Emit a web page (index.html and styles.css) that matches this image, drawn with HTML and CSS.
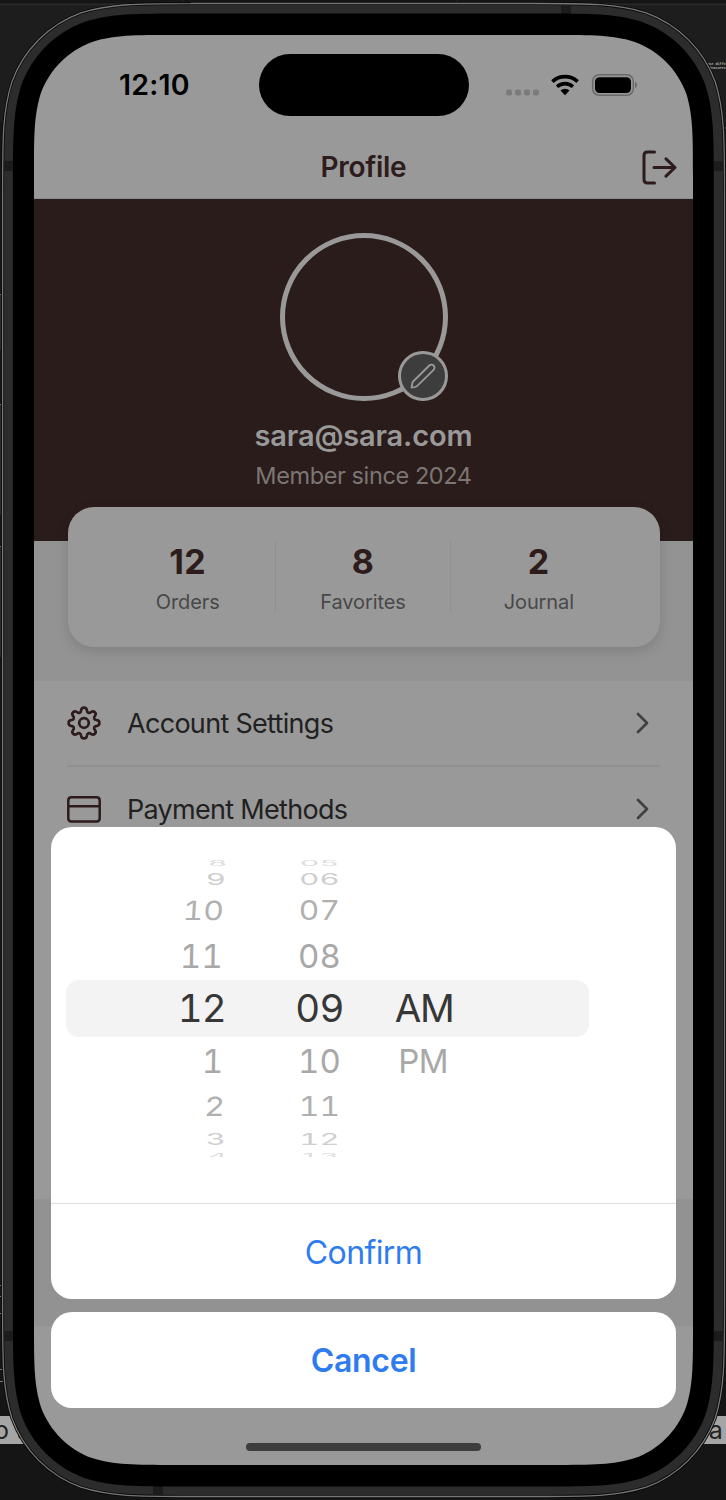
FILE: index.html
```html
<!DOCTYPE html>
<html lang="en">
<head>
<meta charset="utf-8">
<title>Profile</title>
<link rel="stylesheet" href="styles.css">
</head>
<body>
<div class="desktop">
  <div class="backdrop">
    <svg width="726" height="1500" viewBox="0 0 726 1500">
      <rect width="726" height="1500" fill="#151515"/>
      <path d="M0 6H726V122H0Z" fill="#1d1d1d"/>
      <path d="M0 4.5H726" stroke="#292929" stroke-width="2"/>
      <path d="M183 0V4M457 0V4" stroke="#292929"/>
      <path d="M0 294.500H3M0 404.500H3M0 546.500H3M0 1285.500H3M0 1296.500H3M0 1313.500H3M0 1369.500H3M0 1381.500H3" stroke="#777"/>
      <path d="M0 295H3V350H0ZM0 405H3V515H0ZM0 547H3V657H0ZM724 409H726V541H724Z" fill="#292929"/>
      <path d="M0 1416H40V1444H0ZM690 1416H726V1444H690Z" fill="#a5a5a5"/>
      <path d="M723 408.500H726M723 128H726M723 168H726M723 200H726" stroke="#666"/>
      <circle cx="726" cy="850" r="2.500" fill="none" stroke="#888"/>
    </svg>
    <span class="note note-a">use diffe</span>
    <span class="note note-b">features</span>
    <span class="peek peek-left">o t</span>
    <span class="peek peek-right">na</span>
  </div>
  <svg class="frame" width="726" height="1500" viewBox="0 0 726 1500">
    <path d="M192.100 3.500H535c54.600 0 81.900 0 111.200 9.300c32.100 11.700 57.300 36.900 69 69c9.300 29.400 9.300 56.700 9.300 111.300V1307c0 54.600 0 81.900-9.300 111.200c-11.700 32.100-36.900 57.300-69 69c-29.400 9.300-56.700 9.300-111.300 9.300H192.100c-54.600 0-81.900 0-111.200-9.300c-32.100-11.700-57.300-36.900-69-69c-9.300-29.400-9.300-56.700-9.300-111.300V193.100c0-54.600 0-81.900 9.300-111.200c11.700-32.100 36.900-57.300 69-69c29.400-9.300 56.700-9.300 111.300-9.300Z" fill="#2c2c2c" stroke="#0a0a0a" stroke-width="3"/>
    <path d="M192.100 3.500H535c54.600 0 81.900 0 111.200 9.300c32.100 11.700 57.300 36.900 69 69c9.300 29.400 9.300 56.700 9.300 111.300V1307c0 54.600 0 81.900-9.300 111.200c-11.700 32.100-36.900 57.300-69 69c-29.400 9.300-56.700 9.300-111.300 9.300H192.100c-54.600 0-81.900 0-111.200-9.300c-32.100-11.700-57.300-36.900-69-69c-9.300-29.400-9.300-56.700-9.300-111.300V193.100c0-54.600 0-81.900 9.300-111.200c11.700-32.100 36.900-57.300 69-69c29.400-9.300 56.700-9.300 111.300-9.300Z" fill="none" stroke="#777" stroke-width="1.300"/>
    <path d="M561 5h10v9h-10ZM153 1486h10v9h-10ZM4 161h9v10H4ZM714 161h9v10h-9ZM4 1331h9v10H4ZM714 1331h9v10h-9Z" fill="#1c1c1c"/>
    <path d="M185.700 13.500H541c49.700 0 74.600 0 101.400 8.500c29.200 10.600 52.300 33.700 62.900 62.900c8.500 26.800 8.500 51.600 8.500 101.400V1313.700c0 49.700 0 74.600-8.500 101.400c-10.600 29.200-33.700 52.300-62.900 62.900c-26.800 8.500-51.600 8.500-101.400 8.500H185.700c-49.700 0-74.600 0-101.400-8.500c-29.200-10.600-52.300-33.700-62.900-62.900c-8.500-26.800-8.500-51.600-8.500-101.400V186.300c0-49.700 0-74.600 8.500-101.400c10.600-29.200 33.700-52.300 62.900-62.900c26.800-8.500 51.600-8.500 101.400-8.500Z"/>
  </svg>
  <main class="screen">
    <div class="status">
      <span class="clock">12:10</span>
      <span class="island"></span>
      <svg class="signals" width="134" height="26" viewBox="0 0 134 26">
        <g fill="#7b7b7b"><rect x="0" y="17.500" width="6" height="6" rx="2"/><rect x="9" y="17.500" width="6" height="6" rx="2"/><rect x="18" y="17.500" width="6" height="6" rx="2"/><rect x="27" y="17.500" width="6" height="6" rx="2"/></g>
        <g fill="none" stroke="#000" stroke-width="3.600"><path d="M46.400 9.600a18.500 18.500 0 0 1 25.200 0"/><path d="M51.100 14.700a11.600 11.600 0 0 1 15.800 0"/></g>
        <path d="M54.500 18.600a6.600 6.600 0 0 1 9 0L59 23.300Z"/>
        <rect x="86.700" y="2.700" width="40.600" height="20.600" rx="6.500" fill="none" stroke="#6a6a6a" stroke-width="1.500"/>
        <rect x="89" y="5.200" width="36" height="15.800" rx="4.500"/>
        <path d="M129 9.800q4.200 3.200 0 6.400Z" fill="#6a6a6a"/>
      </svg>
    </div>
    <header class="header">
      <h1 class="title">Profile</h1>
      <svg class="logout" width="36" height="36" viewBox="0 0 36 36"><path d="M13.500 2H6.500Q3 2 3 5.500V29.500Q3 33 6.500 33H13.500M13 17.500H34M25 8.800L34 17.500L25 26.200" fill="none" stroke="#2e1c1c" stroke-width="3" stroke-linecap="round" stroke-linejoin="round"/></svg>
    </header>
    <section class="hero">
      <div class="avatar">
        <span class="edit"><svg width="26" height="26" viewBox="0 0 26 26"><path d="M1.500 24.500L2.600 19L19.300 2.500a3 3 0 0 1 4.300 0a3 3 0 0 1 0 4.300L7 23.200Q4.500 24.500 1.500 24.500Z" fill="none" stroke="#999" stroke-width="1.800" stroke-linejoin="round"/></svg></span>
      </div>
      <p class="email">sara@sara.com</p>
      <p class="member">Member since 2024</p>
    </section>
    <section class="stats">
      <div class="stat"><strong>12</strong><span>Orders</span></div>
      <div class="stat"><strong>8</strong><span>Favorites</span></div>
      <div class="stat"><strong>2</strong><span>Journal</span></div>
    </section>
    <section class="menu">
      <div class="row">
        <svg class="icon" width="34" height="34" viewBox="0 0 34 34"><g fill="none" stroke="#2e1c1c" stroke-width="2.700" stroke-linejoin="round"><circle cx="17" cy="17" r="4.800"/><path d="M14.200 4C14.700 .8 19.300 .8 19.800 4C20.200 7 22 7.700 24.200 6C26.800 4 30 7.200 28 9.800C26.300 12 27 13.800 30 14.200C33.200 14.700 33.200 19.300 30 19.800C27 20.200 26.300 22 28 24.200C30 26.800 26.800 30 24.200 28C22 26.300 20.200 27 19.800 30C19.300 33.200 14.700 33.200 14.200 30C13.800 27 12 26.300 9.800 28C7.200 30 4 26.800 6 24.200C7.700 22 7 20.200 4 19.800C.8 19.300 .8 14.700 4 14.200C7 13.800 7.700 12 6 9.800C4 7.200 7.200 4 9.800 6C12 7.700 13.800 7 14.200 4Z"/></g></svg>
        <span class="label">Account Settings</span>
        <svg class="chevron" width="14" height="22" viewBox="0 0 14 22"><path d="M2 2L11 11L2 20" fill="none" stroke="#404040" stroke-width="2.700" stroke-linecap="round" stroke-linejoin="round"/></svg>
      </div>
      <div class="row">
        <svg class="icon" width="34" height="34" viewBox="0 0 34 34"><path d="M4.500 5.200H29.500Q32.700 5.200 32.700 8.400V26.200Q32.700 29.400 29.500 29.400H4.500Q1.300 29.400 1.300 26.200V8.400Q1.300 5.200 4.500 5.200ZM1.300 14.300H32.700" fill="none" stroke="#2e1c1c" stroke-width="2.500"/></svg>
        <span class="label">Payment Methods</span>
        <svg class="chevron" width="14" height="22" viewBox="0 0 14 22"><path d="M2 2L11 11L2 20" fill="none" stroke="#404040" stroke-width="2.700" stroke-linecap="round" stroke-linejoin="round"/></svg>
      </div>
    </section>
    <div class="tabbar"></div>
    <div class="modal">
      <div class="sheet">
        <div class="picker">
          <div class="band"></div>
          <div class="wheel hours">
            <span class="r4 up">8</span><span class="r3">9</span><span class="r2">10</span><span class="r1">11</span><span class="now">12</span><span class="r1">1</span><span class="r2 low">2</span><span class="r3 low">3</span><span class="r4 low">4</span>
          </div>
          <div class="wheel minutes">
            <span class="r4 up">05</span><span class="r3">06</span><span class="r2">07</span><span class="r1">08</span><span class="now">09</span><span class="r1">10</span><span class="r2 low">11</span><span class="r3 low">12</span><span class="r4 low">13</span>
          </div>
          <div class="wheel period"><span class="now">AM</span><span class="r1">PM</span></div>
        </div>
        <div class="action confirm"><span>Confirm</span></div>
      </div>
      <div class="sheet action cancel"><span>Cancel</span></div>
      <div class="home"></div>
    </div>
  </main>
</div>
</body>
</html>
```
FILE: styles.css
```css
* { box-sizing: border-box; }
body { margin: 0; background: #151515; font-family: Inter, "Liberation Sans", sans-serif; }
h1, p { margin: 0; }
svg { display: block; flex: none; }
.desktop { position: relative; width: 726px; height: 1500px; padding: 35px 33px 35px 34px; overflow: hidden; }
.backdrop, .frame { position: absolute; left: 0; top: 0; }
.note { position: absolute; left: 707px; font: bold 3.500px/4px "Liberation Mono", monospace; color: #bbb; white-space: nowrap; }
.note-a { top: 62px; }
.note-b { top: 66px; left: 709px; }
.peek { position: absolute; top: 1415px; font-size: 25px; line-height: 30px; color: #222; white-space: nowrap; }
.peek-left { left: -6px; }
.peek-right { left: 694px; }
.screen { position: relative; display: flex; flex-direction: column; width: 659px; height: 1430px; background: #999; clip-path: path("M140.600 0H518.400c40.500 0 60.700 0 82.500 6.900c23.800 8.700 42.500 27.400 51.200 51.200c6.900 21.800 6.900 42 6.900 82.500V1289.400c0 40.500 0 60.700-6.900 82.500c-8.700 23.800-27.400 42.500-51.200 51.200c-21.800 6.900-42 6.900-82.500 6.900H140.600c-40.500 0-60.700 0-82.500-6.900c-23.800-8.700-42.500-27.400-51.200-51.200c-6.900-21.800-6.900-42-6.900-82.500V140.600c0-40.500 0-60.700 6.900-82.500c8.700-23.800 27.400-42.500 51.200-51.200c21.800-6.900 42-6.900 82.500-6.900Z"); }
.status { height: 99px; padding-top: 1px; display: grid; grid-template-columns: 224.500px 210px 1fr; align-items: center; }
.clock { padding-left: 85px; font-weight: 600; font-size: 28.500px; line-height: 34px; letter-spacing: .2px; }
.island { height: 62px; border-radius: 31px; background: #000; }
.signals { margin-left: 37.500px; margin-top: -1px; }
.header { height: 65px; display: grid; grid-template-columns: 1fr auto 1fr; align-items: center; color: #2e1c1c; border-bottom: 1px solid #8d8b8b; }
.title { grid-column: 2; font-weight: 600; font-size: 28px; line-height: 34px; letter-spacing: -.3px; margin-top: 1px; }
.logout { justify-self: end; margin-right: 16px; margin-top: 4px; }
.hero { flex: none; height: 342px; padding-top: 33.500px; background: #2a1c1b; display: flex; flex-direction: column; align-items: center; }
.avatar { position: relative; width: 168px; height: 168px; border: 5px solid #999; border-radius: 50%; }
.edit { position: absolute; right: -5px; bottom: -5px; width: 50px; height: 50px; border: 3px solid #999; border-radius: 50%; background: #3d3d3d; display: grid; place-items: center; }
.email { margin-top: 17.500px; font-weight: 600; font-size: 29px; line-height: 36px; letter-spacing: -.15px; color: #999; }
.member { margin-top: 6px; font-size: 23.500px; line-height: 32px; letter-spacing: -.4px; color: #7c7674; }
.stats { position: relative; z-index: 0; flex: none; margin: -34px 33.500px 34px; height: 140px; padding: 34px 33px; display: grid; grid-template-columns: repeat(3, 1fr); }
.stats::before { content: ""; position: absolute; z-index: -1; left: -34px; right: -34px; top: 34px; height: 140px; background: #939393; }
.stats::after { content: ""; position: absolute; z-index: -1; inset: 0; background: #999; border-radius: 26px; box-shadow: 0 4px 13px rgba(0,0,0,.13); }
.stat { display: flex; flex-direction: column; align-items: center; height: 72px; border-right: 1px solid #909090; }
.stat:last-child { border-right: 0; }
.stat strong { font-size: 34px; line-height: 41px; color: #2e1c1c; letter-spacing: .5px; }
.stat span { font-size: 20px; line-height: 28px; margin-top: 6px; letter-spacing: -.1px; color: #484848; }
.menu { flex: none; height: 518px; padding: 0 33.500px 0 33px; }
.row { height: 86px; display: flex; align-items: center; border-bottom: 2px solid #8f8f8f; }
.label { margin: 1px 0 0 26px; flex: 1; font-size: 27px; line-height: 34px; letter-spacing: -.7px; color: #212121; }
.chevron { margin-right: 10px; }
.tabbar { flex: 1; border-top: 127px solid #929292; }
.modal { position: absolute; inset: 792px 17px 13px; display: flex; flex-direction: column; align-items: center; gap: 13px; }
.sheet { width: 625px; background: #fff; border-radius: 21px; overflow: hidden; flex: none; }
.picker { position: relative; z-index: 0; height: 376px; padding: 33px 0 0 105px; display: grid; grid-template-columns: 70px 187px 46px; }
.band { position: absolute; z-index: -1; left: 15px; top: 153px; width: 523px; height: 57px; border-radius: 13px; background: #f3f3f3; }
.wheel { display: flex; flex-direction: column; align-items: center; height: 297px; overflow: hidden; font-size: 33px; color: #a8a8a8; font-variant-numeric: tabular-nums; }
.wheel span { flex: none; display: grid; place-items: center; line-height: 1; }
.wheel .now { height: 60px; font-size: 38.500px; letter-spacing: -.8px; color: #373737; }
.wheel .r1 { height: 44px; }
.wheel .now + .r1 { height: 46px; }
.wheel .r2 { height: 48px; transform: scale(.96, .8); color: #b0b0b0; }
.wheel .r2.low { height: 44px; }
.wheel .r3 { height: 16px; transform: translateY(-3px) scale(.94, .5); color: #cecece; }
.wheel .r3.low { height: 20px; transform: translateY(-2px) scale(.94, .5); }
.wheel .r4 { height: 16px; transform: scale(.92, .22); color: #dcdcdc; }
.wheel .up { margin-top: -6px; }
.wheel .r4.low { height: 12px; }
.hours { align-items: flex-end; }
.hours .r1 { transform: translateX(-3px) skewX(-1deg); }
.hours .r2 { transform: translateX(-1px) scale(.96, .8) skewX(-3deg); }
.hours .r4 { transform: translateX(2px) scale(.92, .22); }
.period { width: 80px; margin-left: -29px; padding-top: 118px; }
.wheel.period .now { letter-spacing: -1.500px; }
.wheel.period .r1 { letter-spacing: -.7px; transform: translateX(-1px); }
.action { display: grid; place-items: center; height: 96px; padding-top: 1px; font-size: 32px; color: #2f7cf0; }
.confirm { border-top: 1px solid #ddd; letter-spacing: -.6px; }
.cancel { font-weight: 600; letter-spacing: -.3px; }
.home { margin-top: 22px; width: 235px; height: 8px; border-radius: 4px; background: #3d3d3d; flex: none; }
```
